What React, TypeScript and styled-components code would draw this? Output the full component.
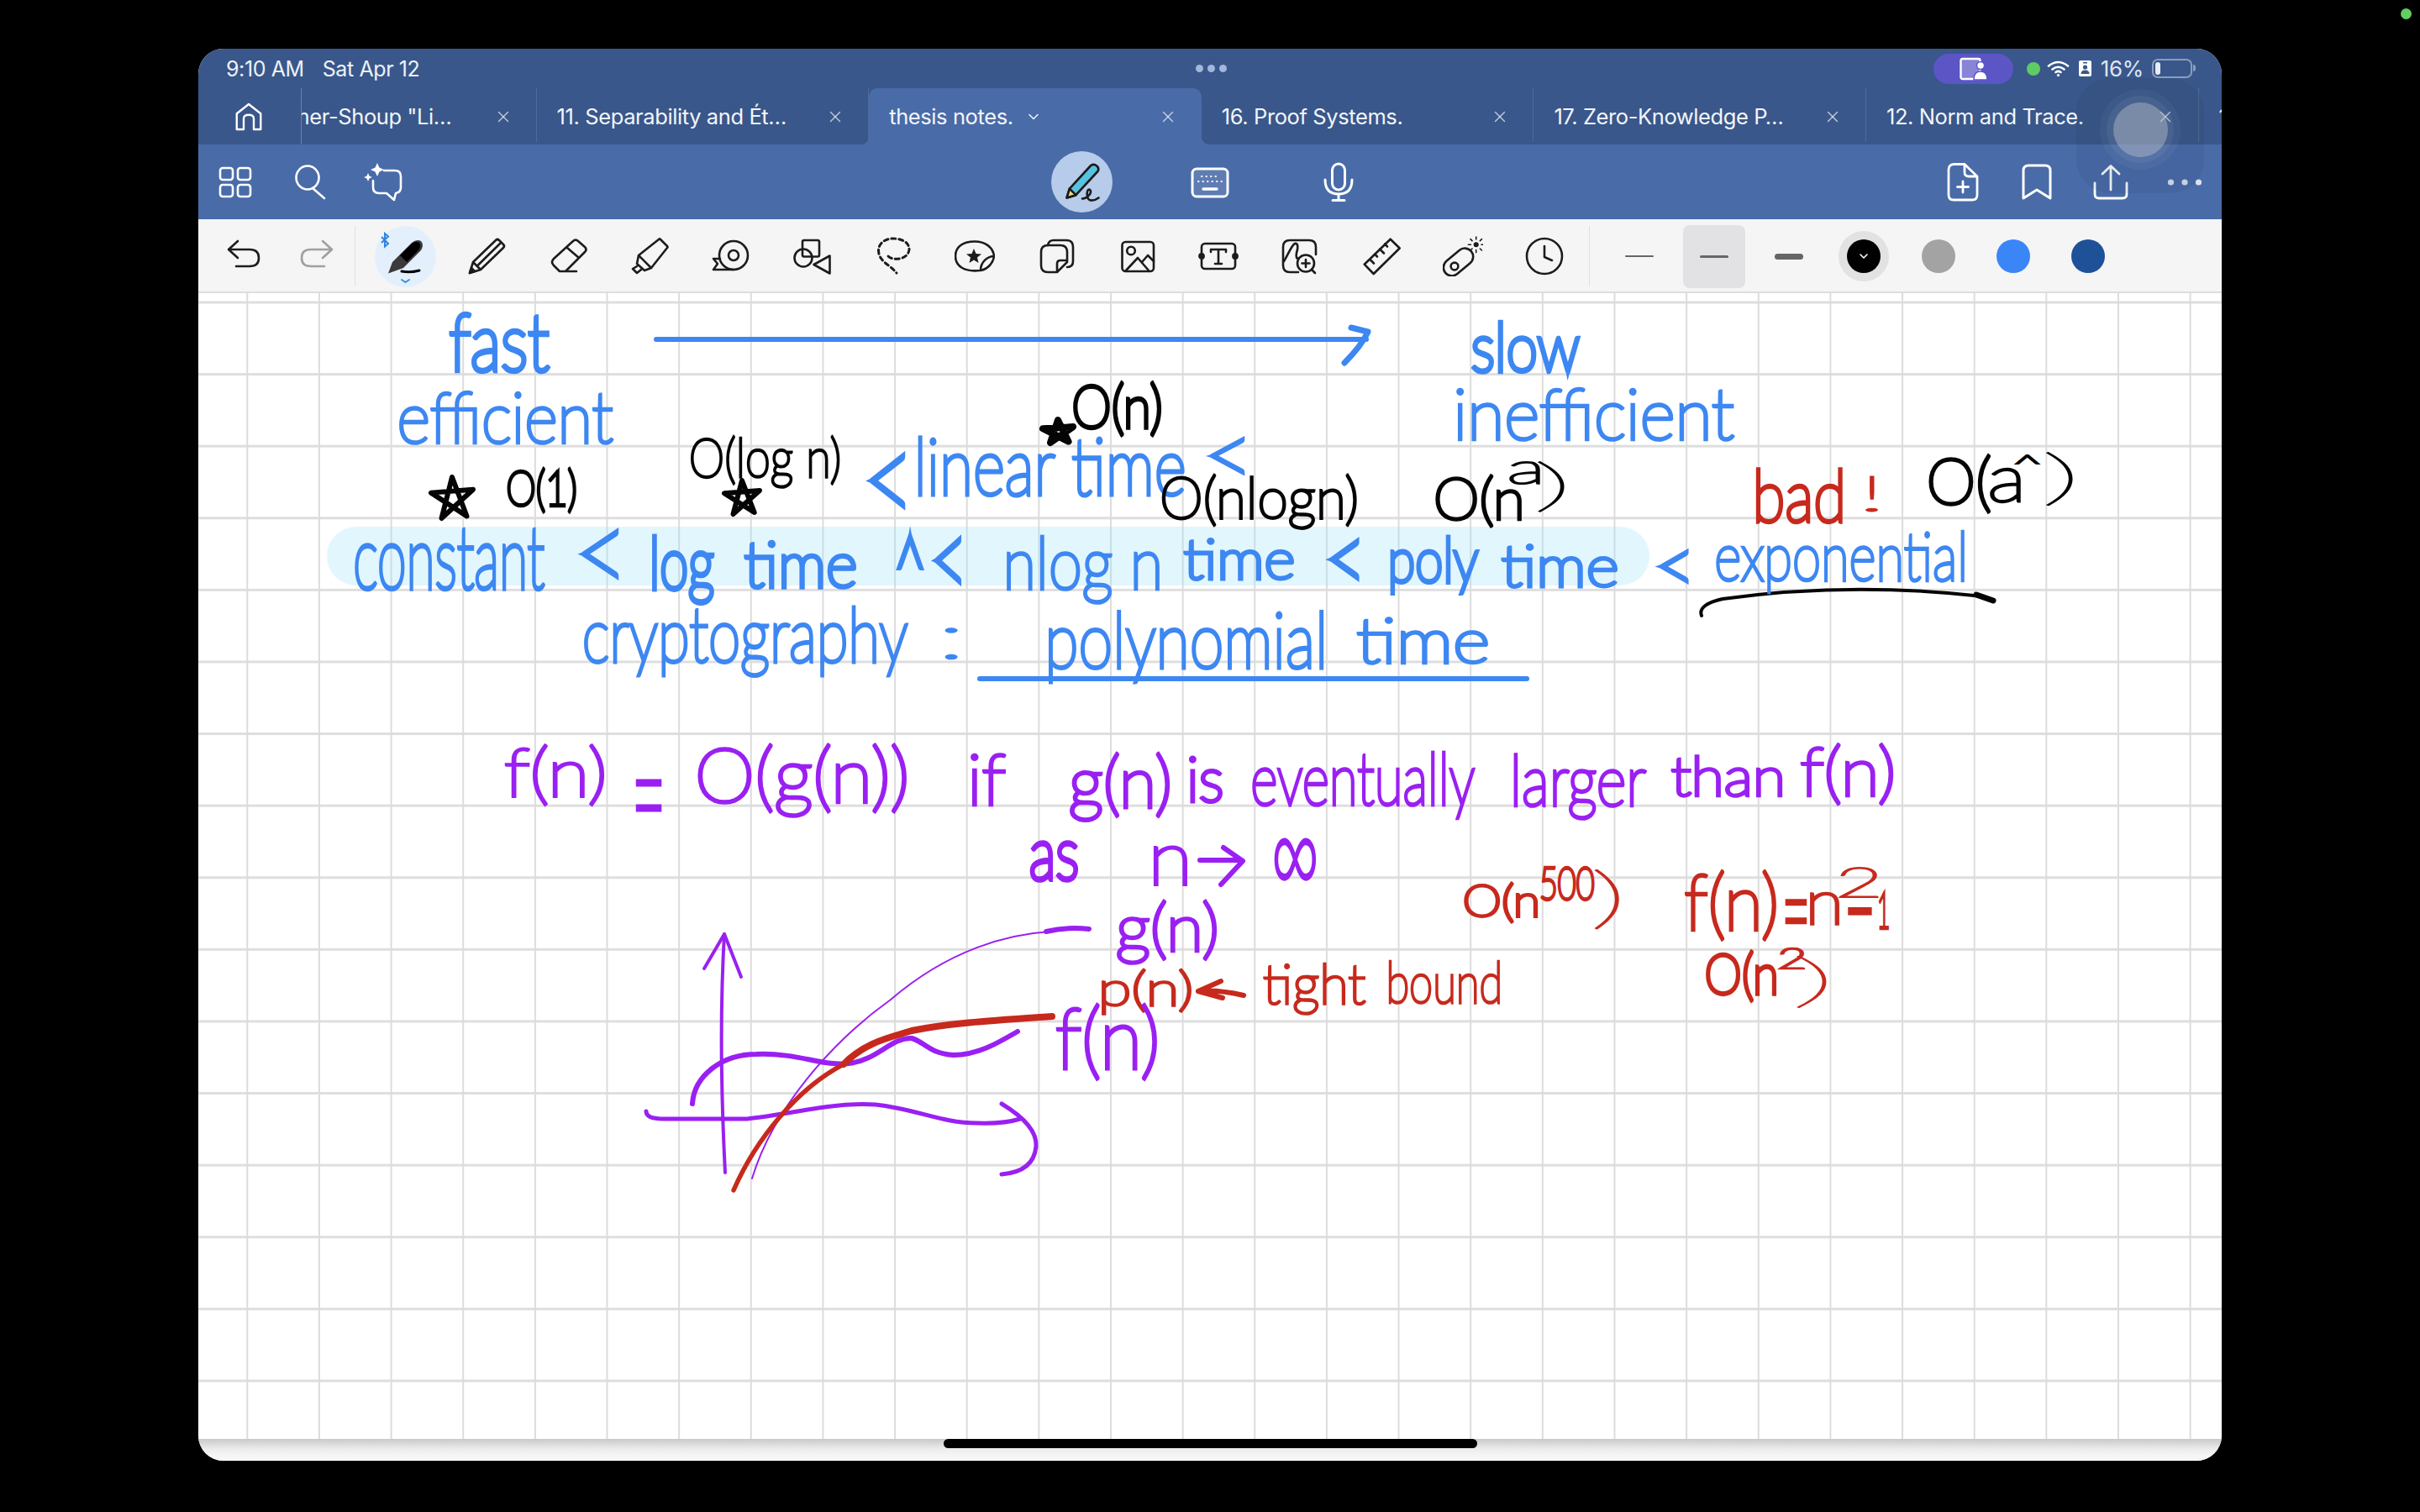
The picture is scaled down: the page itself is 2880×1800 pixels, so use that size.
import * as React from "react";
import styled, { createGlobalStyle, css } from "styled-components";
import { ChevronDown, X } from "lucide-react";

const DARK_BLUE = "#39578a";
const MID_BLUE = "#496ba8";
const INK_BLUE = "#3d87f2";
const INK_PURPLE = "#9a20f2";
const INK_RED = "#c7291d";
const INK_BLACK = "#050505";

const GlobalStyle = createGlobalStyle`
  html, body {
    margin: 0;
    background: #000;
  }
`;

const SScreen = styled.div`
  position: relative;
  width: 2880px;
  height: 1800px;
  box-sizing: border-box;
  padding: 58px 236px 61px;
  display: flex;
  background: #000;
  font-family: Inter, "Liberation Sans", sans-serif;
  overflow: hidden;
`;

const SCameraDot = styled.div`
  position: absolute;
  top: 10px;
  right: 10px;
  width: 13px;
  height: 13px;
  border-radius: 50%;
  background: #5fcf5f;
`;

const SWindow = styled.div`
  position: relative;
  flex: 1;
  display: flex;
  flex-direction: column;
  border-radius: 30px;
  overflow: hidden;
  background: #fff;
`;

const SStatusBar = styled.div`
  height: 47px;
  flex: none;
  display: grid;
  grid-template-columns: 1fr auto 1fr;
  align-items: center;
  padding: 0 30px 0 33px;
  background: ${DARK_BLUE};
  color: #eef1f7;
  font-size: 25px;
`;

const SClock = styled.div`
  display: flex;
  gap: 22px;
  letter-spacing: -0.4px;
`;

const SDots = styled.div`
  display: flex;
  gap: 5px;
`;

const SDot = styled.span`
  width: 9px;
  height: 9px;
  border-radius: 50%;
  background: #a3b6dc;
`;

const SStatusRight = styled.div`
  display: flex;
  align-items: center;
  justify-content: flex-end;
`;

const SPill = styled.div`
  width: 95px;
  height: 36px;
  border-radius: 18px;
  display: flex;
  align-items: center;
  justify-content: center;
  background: #5b55c6;
  margin-right: 16px;
`;

const SGreenDot = styled.span`
  width: 16px;
  height: 16px;
  border-radius: 50%;
  background: #5ecb63;
  margin-right: 8px;
`;

const SFocusWrap = styled.span`
  display: flex;
  margin-left: 11px;
`;

const SPercent = styled.span`
  font-size: 26px;
  letter-spacing: -0.3px;
  margin: 0 10px 0 11px;
  color: #dfe5f1;
`;

const SBattery = styled.div`
  position: relative;
  width: 48px;
  height: 23px;
  box-sizing: border-box;
  border: 2px solid rgba(255, 255, 255, 0.42);
  border-radius: 7px;
  padding: 2px;
  margin-right: 5px;
  &::after {
    content: "";
    position: absolute;
    right: -6px;
    top: 5px;
    width: 3px;
    height: 8px;
    border-radius: 0 3px 3px 0;
    background: rgba(255, 255, 255, 0.42);
  }
`;

const SBatteryLevel = styled.div`
  width: 6px;
  height: 100%;
  border-radius: 3px;
  background: #e8ecf4;
`;

const STabBar = styled.div`
  height: 67px;
  flex: none;
  display: flex;
  background: ${DARK_BLUE};
  color: #fff;
`;

const SHomeButton = styled.div`
  width: 122px;
  flex: none;
  display: flex;
  align-items: center;
  padding-left: 42px;
  box-sizing: border-box;
`;

const STabList = styled.div`
  flex: 1;
  display: flex;
  min-width: 0;
  overflow: hidden;
  border-left: 1px solid rgba(255, 255, 255, 0.25);
`;

const activeTab = css`
  z-index: 1;
  background: ${MID_BLUE};
  border-radius: 10px 10px 0 0;
  &::before,
  &::after {
    content: "";
    position: absolute;
    bottom: 0;
    width: 10px;
    height: 10px;
  }
  &::before {
    left: -10px;
    background: radial-gradient(circle at 0 0, transparent 10px, ${MID_BLUE} 10.5px);
  }
  &::after {
    right: -10px;
    background: radial-gradient(circle at 100% 0, transparent 10px, ${MID_BLUE} 10.5px);
  }
`;

const inactiveTab = css`
  &::after {
    content: "";
    position: absolute;
    top: 0;
    bottom: 3px;
    right: 0;
    width: 1px;
    background: rgba(255, 255, 255, 0.12);
  }
`;

const STab = styled.div<{ $active?: boolean; $offset?: number; $indent?: number }>`
  position: relative;
  width: 395.6px;
  flex: none;
  box-sizing: border-box;
  display: flex;
  align-items: center;
  padding: 0 29px 0 ${(p) => p.$indent || 24}px;
  margin-left: ${(p) => p.$offset || 0}px;
  font-size: 25.5px;
  letter-spacing: -0.4px;
  white-space: nowrap;
  color: #f3f5fa;
  ${(p) => (p.$active ? activeTab : inactiveTab)}
`;

const STabLabel = styled.span`
  flex: 1;
  display: flex;
  align-items: center;
  gap: 14px;
  min-width: 0;
`;

const STabClose = styled.span`
  display: flex;
  color: rgba(255, 255, 255, 0.65);
`;

const SMainToolbar = styled.div`
  height: 89px;
  flex: none;
  display: grid;
  grid-template-columns: 1fr auto 1fr;
  align-items: center;
  background: ${MID_BLUE};
  color: #fff;
`;

const SGroup = styled.div<{ $end?: boolean }>`
  display: flex;
  align-items: center;
  justify-content: ${(p) => (p.$end ? "flex-end" : "flex-start")};
`;

const SSlot = styled.div<{ $width: number }>`
  position: relative;
  width: ${(p) => p.$width}px;
  flex: none;
  display: flex;
  align-items: center;
  justify-content: center;
`;

const SPencilBubble = styled.div`
  width: 73px;
  height: 73px;
  border-radius: 50%;
  display: flex;
  align-items: center;
  justify-content: center;
  background: #b7cbea;
`;

const SPenToolbar = styled.div`
  height: 88px;
  flex: none;
  box-sizing: border-box;
  display: flex;
  align-items: center;
  padding: 2px 0 0 8px;
  background: #f5f5f5;
  color: #1c1c1e;
  border-bottom: 2px solid #dedede;
`;

const SToolDivider = styled.div<{ $before: number; $after: number }>`
  width: 1px;
  height: 72px;
  flex: none;
  margin: 0 ${(p) => p.$after}px 0 ${(p) => p.$before}px;
  background: #e0e0e0;
`;

const SLineChoice = styled.div<{ $selected?: boolean }>`
  width: 74px;
  height: 75px;
  border-radius: 8px;
  display: flex;
  align-items: center;
  justify-content: center;
  background: ${(p) => (p.$selected ? "#e2e2e4" : "transparent")};
`;

const SLineSample = styled.div<{ $thick: number }>`
  width: 34px;
  height: ${(p) => p.$thick}px;
  border-radius: ${(p) => p.$thick / 2}px;
  background: #666;
`;

const SSwatch = styled.div<{ $color: string }>`
  width: 40px;
  height: 40px;
  border-radius: 50%;
  display: flex;
  align-items: center;
  justify-content: center;
  color: #fff;
  background: ${(p) => p.$color};
`;

const SSwatchRing = styled.div`
  width: 60px;
  height: 60px;
  border-radius: 50%;
  display: flex;
  align-items: center;
  justify-content: center;
  background: #e2e2e2;
`;

const SCanvas = styled.div`
  position: relative;
  flex: 1;
  overflow: hidden;
  background-color: #fff;
  background-image: linear-gradient(to right, #dcdcdc 2px, transparent 2px),
    linear-gradient(to bottom, #dedede 3px, transparent 3px);
  background-size: 85.65px 85.6px;
  background-position: 57.3px 9.5px;
`;

const SNoteLayer = styled.div`
  position: absolute;
  left: -236px;
  top: -349px;
  width: 2880px;
  height: 1800px;
`;

const SHighlight = styled.div`
  position: absolute;
  left: 389px;
  top: 627px;
  width: 1574px;
  height: 70px;
  border-radius: 35px;
  background: rgba(160, 224, 250, 0.3);
`;

const SSketch = styled.svg`
  position: absolute;
  left: 0;
  top: 0;
  fill: none;
  stroke-linecap: round;
  stroke-linejoin: round;
`;

const SInkText = styled.span<{ $color: string; $stroke: number }>`
  position: absolute;
  left: 0;
  top: 0;
  transform-origin: 0 0;
  white-space: pre;
  font-family: Lato, "DejaVu Sans", sans-serif;
  font-size: 100px;
  line-height: 100px;
  font-weight: 100;
  color: ${(p) => p.$color};
  -webkit-text-stroke: ${(p) => p.$stroke}px ${(p) => p.$color};
`;

const SBottomStrip = styled.div`
  height: 26px;
  flex: none;
  display: flex;
  justify-content: center;
  background: linear-gradient(to bottom, #c9c9c9, #ececec 12px, #f6f6f6 20px);
`;

const SHomeIndicator = styled.div`
  width: 635px;
  height: 11px;
  border-radius: 6px;
  background: #000;
`;

const SAssistiveTouch = styled.div`
  position: absolute;
  z-index: 2;
  left: 2235px;
  top: 35px;
  width: 152px;
  height: 137px;
  box-sizing: border-box;
  padding-top: 13px;
  border-radius: 40px;
  display: flex;
  align-items: flex-start;
  justify-content: center;
  background: rgba(30, 50, 90, 0.1);
`;

const SAssistiveRing = styled.div<{ $size: number; $color: string }>`
  width: ${(p) => p.$size}px;
  height: ${(p) => p.$size}px;
  border-radius: 50%;
  display: flex;
  align-items: center;
  justify-content: center;
  background: ${(p) => p.$color};
`;

const SIcon = styled.svg.attrs({ viewBox: "0 0 48 48", fill: "none", stroke: "currentColor" })<{
  $size?: number;
  $line?: number;
  $tone?: string;
}>`
  width: ${(p) => p.$size || 48}px;
  height: ${(p) => p.$size || 48}px;
  flex: none;
  color: ${(p) => p.$tone || "inherit"};
  stroke-width: ${(p) => p.$line || 2.6};
  stroke-linecap: round;
  stroke-linejoin: round;
`;

// handwriting: real text squeezed at runtime so its ink fills the box seen in the note
const measureCtx = document.createElement("canvas").getContext("2d") as CanvasRenderingContext2D;
const HAIRLINE_STEM = 1.5;

type InkProps = { text: string; box: number[]; color: string; pen: number };

const Ink = ({ text, box, color, pen }: InkProps) => {
  const [x, y, w, h] = box;
  measureCtx.font = `100 100px Lato, "DejaVu Sans", sans-serif`;
  const m = measureCtx.measureText(text);
  const inkW = m.actualBoundingBoxLeft + m.actualBoundingBoxRight;
  const inkH = m.actualBoundingBoxAscent + m.actualBoundingBoxDescent;
  const sx = w / inkW;
  const sy = h / inkH;
  const baseline = (100 - (m.fontBoundingBoxAscent + m.fontBoundingBoxDescent)) / 2 + m.fontBoundingBoxAscent;
  const left = x + sx * m.actualBoundingBoxLeft;
  const top = y - sy * (baseline - m.actualBoundingBoxAscent);
  // keep the pen width about the same whatever the squeeze is; long words get a lower cap so they don't clog
  const cap = text.length > 4 ? 5.5 : 8;
  const stroke = Math.max(1, Math.min(cap, pen / sx - HAIRLINE_STEM, (pen * 1.2) / sy));
  return (
    <SInkText $color={color} $stroke={stroke} style={{ transform: `translate(${left}px, ${top}px) scale(${sx}, ${sy})` }}>
      {text}
    </SInkText>
  );
};

type Note = [string, number, number, number, number];

const BLUE_NOTES: Note[] = [
  ["fast", 537, 374, 115, 68],
  ["slow", 1754, 383, 124, 60],
  ["efficient", 477, 467, 251, 61],
  ["inefficient", 1735, 463, 327, 61],
  ["<", 1038, 542, 37, 60],
  ["linear time", 1094, 520, 316, 70],
  ["<", 1443, 523, 36, 40],
  ["constant", 424, 630, 223, 72],
  ["<", 695, 633, 39, 54],
  ["log", 778, 638, 70, 79],
  ["time", 888, 645, 129, 55],
  ["^", 1070, 639, 26, 36],
  ["<", 1115, 642, 27, 51],
  ["nlog n", 1200, 638, 178, 79],
  ["time", 1411, 643, 127, 47],
  ["<", 1586, 645, 29, 43],
  ["poly", 1657, 638, 101, 68],
  ["time", 1789, 650, 134, 49],
  ["<", 1978, 658, 29, 34],
  ["exponential", 2044, 632, 292, 73],
  ["cryptography", 697, 723, 382, 82],
  [":", 1126, 748, 12, 37],
  ["polynomial", 1250, 728, 323, 84],
  ["time", 1617, 737, 152, 53],
];

const BLACK_NOTES: Note[] = [
  ["O(n)", 1279, 455, 101, 63],
  ["O(1)", 605, 558, 79, 52],
  ["O(log n)", 823, 520, 175, 60],
  ["O(nlogn)", 1384, 565, 229, 65],
  ["O(n", 1710, 567, 99, 60],
  ["a", 1798, 550, 33, 27],
  [")", 1831, 550, 30, 60],
  ["O(", 2297, 543, 70, 67],
  ["a", 2370, 558, 33, 40],
  ["^", 2400, 542, 25, 10],
  [")", 2436, 538, 30, 64],
];

const RED_NOTES: Note[] = [
  ["bad", 2092, 558, 99, 64],
  ["!", 2220, 567, 15, 43],
  ["O(n", 1744, 1052, 84, 46],
  ["500", 1835, 1033, 61, 39],
  [")", 1899, 1035, 27, 72],
  ["f(n)", 2007, 1037, 105, 82],
  ["=", 2126, 1073, 23, 24],
  ["n", 2156, 1063, 31, 37],
  ["2", 2190, 1033, 44, 35],
  ["-", 2200, 1083, 27, 3],
  ["1", 2237, 1063, 10, 42],
  ["O(n", 2032, 1133, 80, 59],
  ["2", 2119, 1129, 27, 24],
  [")", 2139, 1138, 34, 62],
  ["p(n)", 1313, 1155, 103, 52],
  ["tight", 1505, 1147, 119, 61],
  ["bound", 1654, 1145, 130, 50],
];

const PURPLE_NOTES: Note[] = [
  ["f(n)", 603, 887, 114, 71],
  ["=", 758, 931, 28, 32],
  ["O(g(n))", 832, 887, 245, 85],
  ["if", 1157, 898, 38, 60],
  ["g(n)", 1275, 898, 115, 79],
  ["is", 1417, 902, 36, 53],
  ["eventually", 1492, 895, 262, 78],
  ["larger", 1803, 898, 155, 77],
  ["than", 1991, 901, 128, 47],
  ["f(n)", 2145, 886, 106, 71],
  ["as", 1228, 1003, 53, 45],
  ["n", 1375, 1008, 36, 45],
  ["∞", 1518, 1001, 47, 45],
  ["g(n)", 1331, 1073, 115, 74],
  ["f(n)", 1259, 1196, 116, 89],
];

const Star = ({ x, y, w, h, line }: { x: number; y: number; w: number; h: number; line: number }) => (
  <path
    stroke={INK_BLACK}
    strokeWidth={line}
    d={`M${x + 0.25 * w} ${y + h} L${x + 0.5 * w} ${y} L${x + 0.85 * w} ${y + 0.95 * h} L${x} ${y + 0.38 * h} L${x + w} ${y + 0.3 * h} Z`}
  />
);

const Sketch = () => (
  <SSketch width={2880} height={1800} viewBox="0 0 2880 1800">
    <g stroke={INK_BLUE}>
      <path strokeWidth={6} d="M781 404 H1626" />
      <path strokeWidth={7} d="M1608 390 L1628 395 Q1620 412 1600 432" />
      <path strokeWidth={6} d="M1166 808 H1817" />
    </g>
    <Star x={513} y={568} w={50} h={49} line={6} />
    <Star x={862} y={572} w={42} h={40} line={6} />
    <Star x={1241} y={500} w={36} h={27} line={8} />
    <path stroke={INK_BLACK} strokeWidth={4} d="M2025 733 Q2020 720 2050 713 Q2200 692 2360 710" />
    <path stroke={INK_BLACK} strokeWidth={7} d="M2352 708 L2372 715" />
    <g stroke={INK_PURPLE}>
      <path strokeWidth={6} d="M1428 1024 L1476 1024 M1456 1009 L1479 1025 L1453 1053" />
      <path strokeWidth={4} d="M863 1396 C858 1300 857 1200 862 1112" />
      <path strokeWidth={4} d="M838 1153 L862 1112 L882 1163" />
      <path strokeWidth={5} d="M769 1323 Q769 1332 790 1332 L889 1332 C950 1325 990 1312 1042 1315 C1090 1320 1120 1337 1163 1337 Q1195 1338 1214 1332" />
      <path strokeWidth={5} d="M1192 1314 Q1235 1340 1233 1365 Q1230 1395 1192 1398" />
      <path strokeWidth={6} d="M824 1314 C826 1280 860 1255 900 1255 C950 1253 980 1270 1010 1266 C1045 1262 1060 1235 1085 1236 C1100 1240 1105 1254 1135 1256 C1165 1256 1190 1240 1211 1228" />
      <path strokeWidth={2} d="M895 1403 C920 1320 990 1240 1060 1190 C1130 1130 1200 1112 1250 1109" />
      <path strokeWidth={6} d="M1245 1109 Q1270 1103 1296 1106" />
    </g>
    <g stroke={INK_RED}>
      <path strokeWidth={5.5} d="M873 1417 C900 1355 950 1295 1004 1267" />
      <path strokeWidth={8} d="M1004 1267 C1030 1240 1060 1235 1085 1227 C1130 1218 1180 1215 1252 1210" />
      <path strokeWidth={6} d="M1426 1180 L1453 1168 M1426 1180 L1455 1188 M1426 1180 Q1450 1178 1480 1185" />
    </g>
  </SSketch>
);

const HomeIcon = () => (
  <SIcon $size={36} $line={3.2}>
    <path d="M5 44 V19 L24 4 L43 19 V44 H32 V27 Q32 21 24 21 Q16 21 16 27 V44 Z" />
  </SIcon>
);

const GridIcon = () => (
  <SIcon>
    <rect x="6" y="7" width="15" height="14" rx="3" />
    <rect x="27" y="7" width="15" height="14" rx="3" />
    <rect x="6" y="27" width="15" height="14" rx="3" />
    <rect x="27" y="27" width="15" height="14" rx="3" />
  </SIcon>
);

const SearchIcon = () => (
  <SIcon>
    <ellipse cx="22" cy="18.5" rx="13.5" ry="14" />
    <path d="M28 31 L42 43" />
  </SIcon>
);

const AssistantIcon = () => (
  <SIcon>
    <path d="M25 10 H38 Q45 10 45 17 V30 Q45 36 39 37 L37 45 L28 37 H19 Q12 37 12 30 V22" />
    <path fill="currentColor" stroke="none" d="M17 1 L19.5 6.5 L25 9 L19.5 11.5 L17 17 L14.5 11.5 L9 9 L14.5 6.5 Z" />
    <path fill="currentColor" stroke="none" d="M6 13 L7.5 16.5 L11 18 L7.5 19.5 L6 23 L4.5 19.5 L1 18 L4.5 16.5 Z" />
  </SIcon>
);

const NotePencilIcon = () => (
  <SIcon $size={52} $line={2.4} $tone="#1a1a1a">
    <path fill="#57c2e2" d="M7 41 L10 31 L33 6 Q36 3 40 6 Q43 9 41 12 L17 38 Z" />
    <path fill="#f1d27a" d="M7 41 L10 31 L17 38 Z" />
    <path d="M24 42 C30 42 36 34 32 32 C28 31 28 44 34 44 Q38 44 42 41" />
  </SIcon>
);

const KeyboardIcon = () => (
  <SIcon $line={3}>
    <rect x="3" y="8" width="42" height="33" rx="5" fill="rgba(255,255,255,.12)" />
    <path strokeWidth="2" strokeDasharray="0.5 5" d="M14 17 H34 M10 23 H38" />
    <path strokeWidth="3.4" d="M16 32 H32" />
  </SIcon>
);

const MicIcon = () => (
  <SIcon $line={3}>
    <rect x="16.5" y="2" width="15" height="31" rx="7.5" />
    <path d="M8 21 Q8 38 24 38 Q40 38 40 21 M24 38 V45 M17 45.5 H31" />
  </SIcon>
);

const FilePlusIcon = () => (
  <SIcon $line={2.8}>
    <path d="M14 2.5 H26 L41 17 V39 Q41 45 35 45 H13 Q7 45 7 39 V9 Q7 2.5 14 2.5 Z M26 2.5 V12 Q26 17 31 17 H41" />
    <path d="M24 23 V36 M17.5 29.5 H30.5" />
  </SIcon>
);

const BookmarkIcon = () => (
  <SIcon $line={3}>
    <path d="M8 43 V10 Q8 4 14 4 H34 Q40 4 40 10 V43 L24 33 Z" />
  </SIcon>
);

const ShareIcon = () => (
  <SIcon $line={2.8}>
    <path d="M5 25 V38 Q5 43 10 43 H38 Q43 43 43 38 V25 M24 33 V5 M14 14 L24 4.5 L34 14" />
  </SIcon>
);

const MoreIcon = () => (
  <SIcon>
    <g fill="#dbe2f0" stroke="none">
      <circle cx="7.5" cy="24" r="3.6" />
      <circle cx="24" cy="24" r="3.6" />
      <circle cx="40.5" cy="24" r="3.6" />
    </g>
  </SIcon>
);

const UndoIcon = () => (
  <SIcon>
    <path d="M8 16 H32 Q43 16 43 26 Q43 36 32 36 H16 M18 6 L7 16 L18 26" />
  </SIcon>
);

const RedoIcon = () => (
  <SIcon $tone="#a0a0a0">
    <path d="M40 16 H16 Q5 16 5 26 Q5 36 16 36 H32 M30 6 L41 16 L30 26" />
  </SIcon>
);

const PenTool = () => (
  <svg width="73" height="73" viewBox="0 0 73 73">
    <circle cx="36.5" cy="36.5" r="36.5" fill="#e3f0fb" />
    <path fill="#3a3a3c" d="M16 56.5 L21 43 L44 20 Q50 15 55 18 Q59 22 55 29 L34 50 Z" />
    <path fill="#000" d="M30 35 L44 21 Q49 17 53 20 Q56 24 52 29 L38 43 Z" />
    <path fill="none" stroke="#000" strokeWidth="3" strokeLinecap="round" d="M32 54 Q42 56 53 53" />
    <path fill="none" stroke="#3f8fe0" strokeWidth="2" strokeLinecap="round" d="M32 64 L36.5 67 L41 64" />
    <path fill="none" stroke="#2f86de" strokeWidth="2" d="M8 13 L16 21 L12 24.5 V9 L16 12.5 L8 20" />
  </svg>
);

const PencilIcon = () => (
  <SIcon>
    <path d="M4 44 L8 31 L35 5 Q37 3 39 5 L44 10 Q46 12 44 14 L17 40 Z M8 31 L17 40 M13 35.5 L40 9" />
    <path fill="currentColor" d="M4 44 L6 38 L10 42 Z" />
  </SIcon>
);

const EraserIcon = () => (
  <SIcon>
    <path d="M14 42 L7 35 Q3 31 7 27 L30 6 Q33 3 36 6 L44 13 Q47 16 44 19 L21 42 Z M23 14 L37 26 M14 42 H34" />
  </SIcon>
);

const HighlighterIcon = () => (
  <SIcon>
    <path d="M35 4 Q36 3 37 4 L45 12 Q46 13 45 14 L26 38 L11 23 Z M11 23 L9 33 L18 41 L26 38" />
    <path d="M9 36 L4 39 L9 44 L14 40" />
  </SIcon>
);

const TapeIcon = () => (
  <SIcon>
    <circle cx="27" cy="23" r="17" />
    <circle cx="27" cy="23" r="6" />
    <path d="M27 40 H3 L8 33 L3 27 H11" />
  </SIcon>
);

const ShapesIcon = () => (
  <SIcon>
    <rect x="13" y="5" width="20" height="19.5" rx="2" />
    <circle cx="14" cy="26" r="10.5" />
    <path d="M26.5 34 L45.5 23.5 V44.5 Z" />
  </SIcon>
);

const LassoIcon = () => (
  <SIcon $line={3}>
    <path strokeDasharray="5 4" d="M18 24 C24 30 42 28 43 16 C43 6 32 3 24 3 C14 3 6.5 9 6.5 17 C6.5 30 20 34 28 44" />
  </SIcon>
);

const StickerIcon = () => (
  <SIcon>
    <path d="M30 41 C12 43 1 36 1 24 C1 12 11 6.5 24 6.5 C36 6.5 46 13 47 24 C40 24 31 30 31 41 C40 39 46 32 47 24" />
    <path fill="currentColor" stroke="none" d="M23 15 L25.5 21 L32 21.5 L27 25.5 L28.5 32 L23 28.5 L17.5 32 L19 25.5 L14 21.5 L20.5 21 Z" />
  </SIcon>
);

const StackIcon = () => (
  <SIcon>
    <path d="M14 11 H29 Q37 11 37 19 V31 L25 43 H14 Q6 43 6 35 V19 Q6 11 14 11 Z M37 29 H29 Q25 29 25 33 V43" />
    <path d="M14 11 Q15 5 21 5 H36 Q44 5 44 13 V30 Q44 37 37 37" />
  </SIcon>
);

const ImageIcon = () => (
  <SIcon>
    <rect x="5.5" y="7" width="37.5" height="35" rx="4" />
    <circle cx="16" cy="17.5" r="4.8" />
    <path d="M10 41 L24 26 L37 41 M29 31 L36 23 L43 30" />
  </SIcon>
);

const TextBoxIcon = () => (
  <SIcon>
    <rect x="4" y="9" width="40" height="30" rx="4" />
    <path d="M15 19 V16 H33 V19 M24 16 V33 M20 33 H28" />
    <circle cx="4" cy="24" r="2.6" fill="currentColor" />
    <circle cx="44" cy="24" r="2.6" fill="currentColor" />
  </SIcon>
);

const InkSearchIcon = () => (
  <SIcon>
    <path d="M22 43 H12 Q4 43 4 35 V13 Q4 5 12 5 H35 Q43 5 43 13 V22" />
    <path d="M5 30 C10 22 14 11 18 9 C22 8 22 14 20 20 C19 25 20 28 23 26" />
    <circle cx="31" cy="32.5" r="10" />
    <path d="M31 28 V37 M26.5 32.5 H35.5 M38 40 L42 44" />
  </SIcon>
);

const RulerIcon = () => (
  <SIcon>
    <path d="M3.7 33.7 L34.7 3.7 L45.7 14.5 L14.7 45 Z M10 27.5 L15 32.5 M16 21.5 L19 24.5 M22 15.5 L27 20.5 M28 9.5 L31 12.5" />
  </SIcon>
);

const LaserIcon = () => (
  <SIcon>
    <rect x="-1.5" y="21" width="40" height="20" rx="10" transform="rotate(-40 18.5 31)" />
    <circle cx="14" cy="36" r="4.4" />
    <circle cx="39.7" cy="10.3" r="3" fill="currentColor" stroke="none" />
    <path strokeWidth="1.6" d="M39.7 1 V4 M39.7 16.6 V19.6 M30.4 10.3 H33.4 M46 10.3 H48 M33 3.6 L35 5.6 M44.4 15 L46.4 17 M33 17 L35 15 M44.4 5.6 L46.4 3.6" />
  </SIcon>
);

const ClockIcon = () => (
  <SIcon>
    <circle cx="24" cy="24" r="21" />
    <path d="M24 12 V25 L33 29" />
  </SIcon>
);

const WifiIcon = () => (
  <svg width="27" height="21" viewBox="0 0 27 21" fill="none" stroke="#fff" strokeWidth="2.6" strokeLinecap="round">
    <path d="M2 7.5 Q13.5 -1.5 25 7.5 M6.5 11.5 Q13.5 6 20.5 11.5 M10.5 15 Q13.5 12.8 16.5 15" />
    <circle cx="13.5" cy="18.6" r="1.6" fill="#fff" stroke="none" />
  </svg>
);

const FocusIcon = () => (
  <svg width="15" height="19" viewBox="0 0 15 19">
    <rect width="15" height="19" rx="2" fill="#fff" />
    <circle cx="7.5" cy="8" r="2.6" fill="#39578a" />
    <path fill="#39578a" d="M2.5 16 Q2.5 11.5 7.5 11.5 Q12.5 11.5 12.5 16 Z" />
    <rect x="5" y="2" width="5" height="1.5" fill="#39578a" />
  </svg>
);

const PresenterIcon = () => (
  <svg width="32" height="28" viewBox="0 0 32 28" fill="none">
    <rect x="1.5" y="2" width="23" height="24" rx="2" stroke="#fff" strokeWidth="2.4" fill="rgba(255,255,255,.28)" />
    <circle cx="25" cy="10" r="4.5" fill="#fff" stroke="#5b55c6" strokeWidth="1.5" />
    <path fill="#fff" stroke="#5b55c6" strokeWidth="1.5" d="M17 27 Q17 17 25 17 Q33 17 33 27 Z" />
  </svg>
);

const TABS = [
  { title: 'Cramer-Shoup "Li…', offset: -116, indent: 62 },
  { title: "11. Separability and Ét…" },
  { title: "thesis notes.", active: true },
  { title: "16. Proof Systems." },
  { title: "17. Zero-Knowledge P…" },
  { title: "12. Norm and Trace." },
  { title: "13. Lattices." },
];

const NAV_LEFT = [GridIcon, SearchIcon, AssistantIcon];
const NAV_RIGHT = [FilePlusIcon, BookmarkIcon, ShareIcon, MoreIcon];
const TOOLS = [
  PencilIcon,
  EraserIcon,
  HighlighterIcon,
  TapeIcon,
  ShapesIcon,
  LassoIcon,
  StickerIcon,
  StackIcon,
  ImageIcon,
  TextBoxIcon,
  InkSearchIcon,
  RulerIcon,
  LaserIcon,
  ClockIcon,
];
const LINES = [
  { thick: 2 },
  { thick: 3, selected: true },
  { thick: 7 },
];
const COLORS = ["#a3a3a3", "#3a86f7", "#1f5199"];

const StatusBar = () => (
  <SStatusBar>
    <SClock>
      <span>9:10 AM</span>
      <span>Sat Apr 12</span>
    </SClock>
    <SDots>
      <SDot />
      <SDot />
      <SDot />
    </SDots>
    <SStatusRight>
      <SPill>
        <PresenterIcon />
      </SPill>
      <SGreenDot />
      <WifiIcon />
      <SFocusWrap>
        <FocusIcon />
      </SFocusWrap>
      <SPercent>16%</SPercent>
      <SBattery>
        <SBatteryLevel />
      </SBattery>
    </SStatusRight>
  </SStatusBar>
);

const TabBar = () => (
  <STabBar>
    <SHomeButton>
      <HomeIcon />
    </SHomeButton>
    <STabList>
      {TABS.map((tab) => (
        <STab key={tab.title} $active={tab.active} $offset={tab.offset} $indent={tab.indent}>
          <STabLabel>
            {tab.title}
            {tab.active && <ChevronDown size={20} strokeWidth={1.8} />}
          </STabLabel>
          <STabClose>
            <X size={22} strokeWidth={1.6} />
          </STabClose>
        </STab>
      ))}
    </STabList>
  </STabBar>
);

const MainToolbar = () => (
  <SMainToolbar>
    <SGroup>
      {NAV_LEFT.map((Icon, i) => (
        <SSlot key={i} $width={88}>
          <Icon />
        </SSlot>
      ))}
    </SGroup>
    <SGroup>
      <SSlot $width={152.5}>
        <SPencilBubble>
          <NotePencilIcon />
        </SPencilBubble>
      </SSlot>
      <SSlot $width={152.5}>
        <KeyboardIcon />
      </SSlot>
      <SSlot $width={152.5}>
        <MicIcon />
      </SSlot>
    </SGroup>
    <SGroup $end>
      {NAV_RIGHT.map((Icon, i) => (
        <SSlot key={i} $width={88}>
          <Icon />
        </SSlot>
      ))}
    </SGroup>
  </SMainToolbar>
);

const PenToolbar = () => (
  <SPenToolbar>
    <SSlot $width={89}>
      <UndoIcon />
    </SSlot>
    <SSlot $width={89}>
      <RedoIcon />
    </SSlot>
    <SToolDivider $before={0} $after={11} />
    <SSlot $width={96.8}>
      <PenTool />
    </SSlot>
    {TOOLS.map((Icon, i) => (
      <SSlot key={i} $width={96.8}>
        <Icon />
      </SSlot>
    ))}
    <SToolDivider $before={5} $after={15} />
    {LINES.map((line, i) => (
      <SSlot key={i} $width={89}>
        <SLineChoice $selected={line.selected}>
          <SLineSample $thick={line.thick} />
        </SLineChoice>
      </SSlot>
    ))}
    <SSlot $width={89}>
      <SSwatchRing>
        <SSwatch $color="#000">
          <ChevronDown size={16} strokeWidth={2.4} />
        </SSwatch>
      </SSwatchRing>
    </SSlot>
    {COLORS.map((color) => (
      <SSlot key={color} $width={89}>
        <SSwatch $color={color} />
      </SSlot>
    ))}
  </SPenToolbar>
);

const notesOf = (notes: Note[], color: string, prefix: string, pen: number) =>
  notes.map(([text, x, y, w, h], i) => (
    <Ink key={prefix + i} text={text} box={[x, y, w, h]} color={color} pen={pen} />
  ));

const App = () => (
  <>
    <GlobalStyle />
    <SScreen>
      <SCameraDot />
      <SWindow>
        <StatusBar />
        <TabBar />
        <MainToolbar />
        <PenToolbar />
        <SCanvas>
          <SNoteLayer>
            <SHighlight />
            <Sketch />
            {notesOf(BLUE_NOTES, INK_BLUE, "b", 6.5)}
            {notesOf(BLACK_NOTES, INK_BLACK, "k", 5.5)}
            {notesOf(RED_NOTES, INK_RED, "r", 5.5)}
            {notesOf(PURPLE_NOTES, INK_PURPLE, "p", 6)}
          </SNoteLayer>
        </SCanvas>
        <SBottomStrip>
          <SHomeIndicator />
        </SBottomStrip>
        <SAssistiveTouch>
          <SAssistiveRing $size={96} $color="rgba(255, 255, 255, 0.04)">
            <SAssistiveRing $size={80} $color="rgba(255, 255, 255, 0.06)">
              <SAssistiveRing $size={65} $color="rgba(190, 195, 200, 0.42)" />
            </SAssistiveRing>
          </SAssistiveRing>
        </SAssistiveTouch>
      </SWindow>
    </SScreen>
  </>
);

export default App;
